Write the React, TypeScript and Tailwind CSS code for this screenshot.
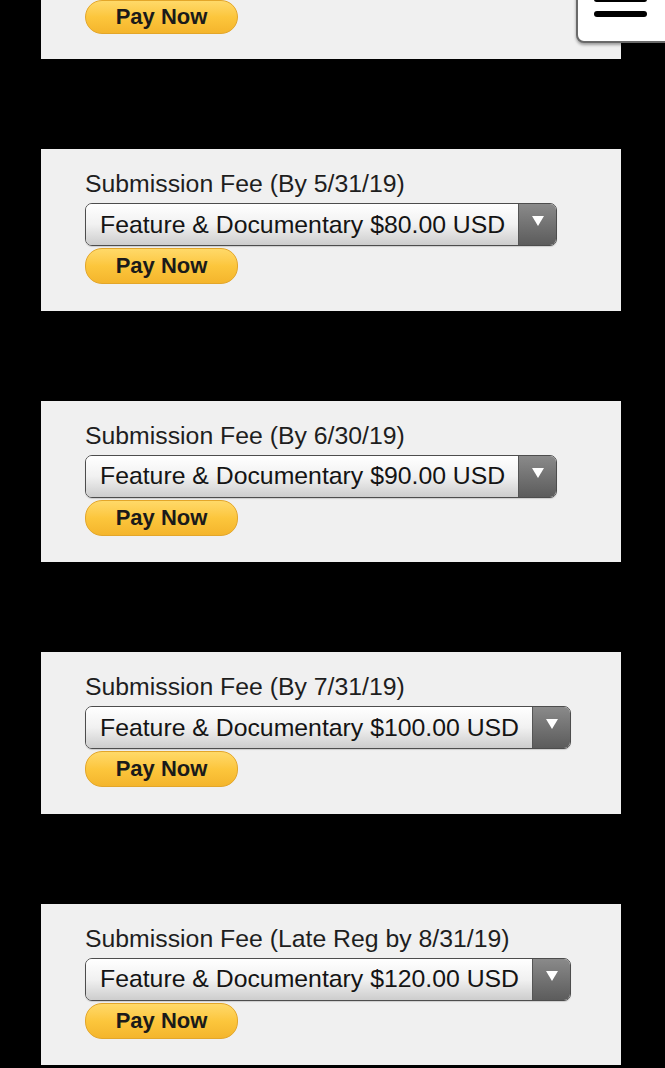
import React from "react";

const cards = [
  { label: "Submission Fee (By 5/31/19)", option: "Feature & Documentary $80.00 USD" },
  { label: "Submission Fee (By 6/30/19)", option: "Feature & Documentary $90.00 USD" },
  { label: "Submission Fee (By 7/31/19)", option: "Feature & Documentary $100.00 USD" },
  { label: "Submission Fee (Late Reg by 8/31/19)", option: "Feature & Documentary $120.00 USD" },
];

function PayNow({ className = "" }: { className?: string }) {
  return (
    <button
      className={`${className} w-[153px] h-[36px] rounded-[17px] border border-[#e3a62a] bg-gradient-to-b from-[#ffd968] via-[#fcc63c] to-[#f4b52c] text-[22px] font-bold text-[#1a1a1a] leading-none flex items-center justify-center`}
    >
      Pay Now
    </button>
  );
}

function Card({ label, option }: { label: string; option: string }) {
  return (
    <div className="ml-[41px] w-[580px] h-[161.5px] shrink-0 bg-[#f0f0f0] pl-[44px] pt-[22px]">
      <div className="text-[24.8px] leading-[26px] text-[#1e1e1e] whitespace-nowrap">{label}</div>
      <div className="mt-[6px] inline-flex h-[43px] rounded-[7px] border border-[#4d4d4d] overflow-hidden shadow-[0_1px_1px_rgba(0,0,0,0.15)]">
        <div className="flex items-center pl-[14px] pr-[13px] bg-gradient-to-b from-[#ffffff] via-[#f1f1f1] to-[#cdcdcd] text-[24.8px] text-[#141414] whitespace-nowrap">
          {option}
        </div>
        <div className="w-[38px] flex items-start justify-center pt-[12px] border-l border-[#555] bg-gradient-to-b from-[#8a8a8a] to-[#5c5c5c]">
          <svg width="12" height="10" viewBox="0 0 12 10">
            <polygon points="0,0 12,0 6,10" fill="#ffffff" />
          </svg>
        </div>
      </div>
      <div>
        <PayNow className="mt-[2px]" />
      </div>
    </div>
  );
}

export default function App() {
  return (
    <div className="relative min-h-[1068px] h-[1068px] bg-black overflow-hidden font-['Liberation_Sans',Arial,sans-serif]">
      <div className="flex flex-col gap-[90px]">
        <div className="ml-[41px] w-[580px] h-[59px] shrink-0 bg-[#f0f0f0] pl-[44px] flex flex-col justify-end pb-[25px]">
          <PayNow />
        </div>
        {cards.map((c, i) => (
          <Card key={i} label={c.label} option={c.option} />
        ))}
      </div>
      <div className="absolute right-[-10px] top-[-20px] w-[99px] h-[63px] bg-white border-2 border-[#6a6a6a] rounded-[8px] shadow-[0_2px_3px_rgba(0,0,0,0.35)] flex flex-col justify-end pb-[24px] pl-[16px] gap-[9px]">
        <div className="w-[53px] h-[6px] rounded-full bg-black" />
        <div className="w-[53px] h-[6px] rounded-full bg-black" />
        <div className="w-[53px] h-[6px] rounded-full bg-black" />
      </div>
    </div>
  );
}
